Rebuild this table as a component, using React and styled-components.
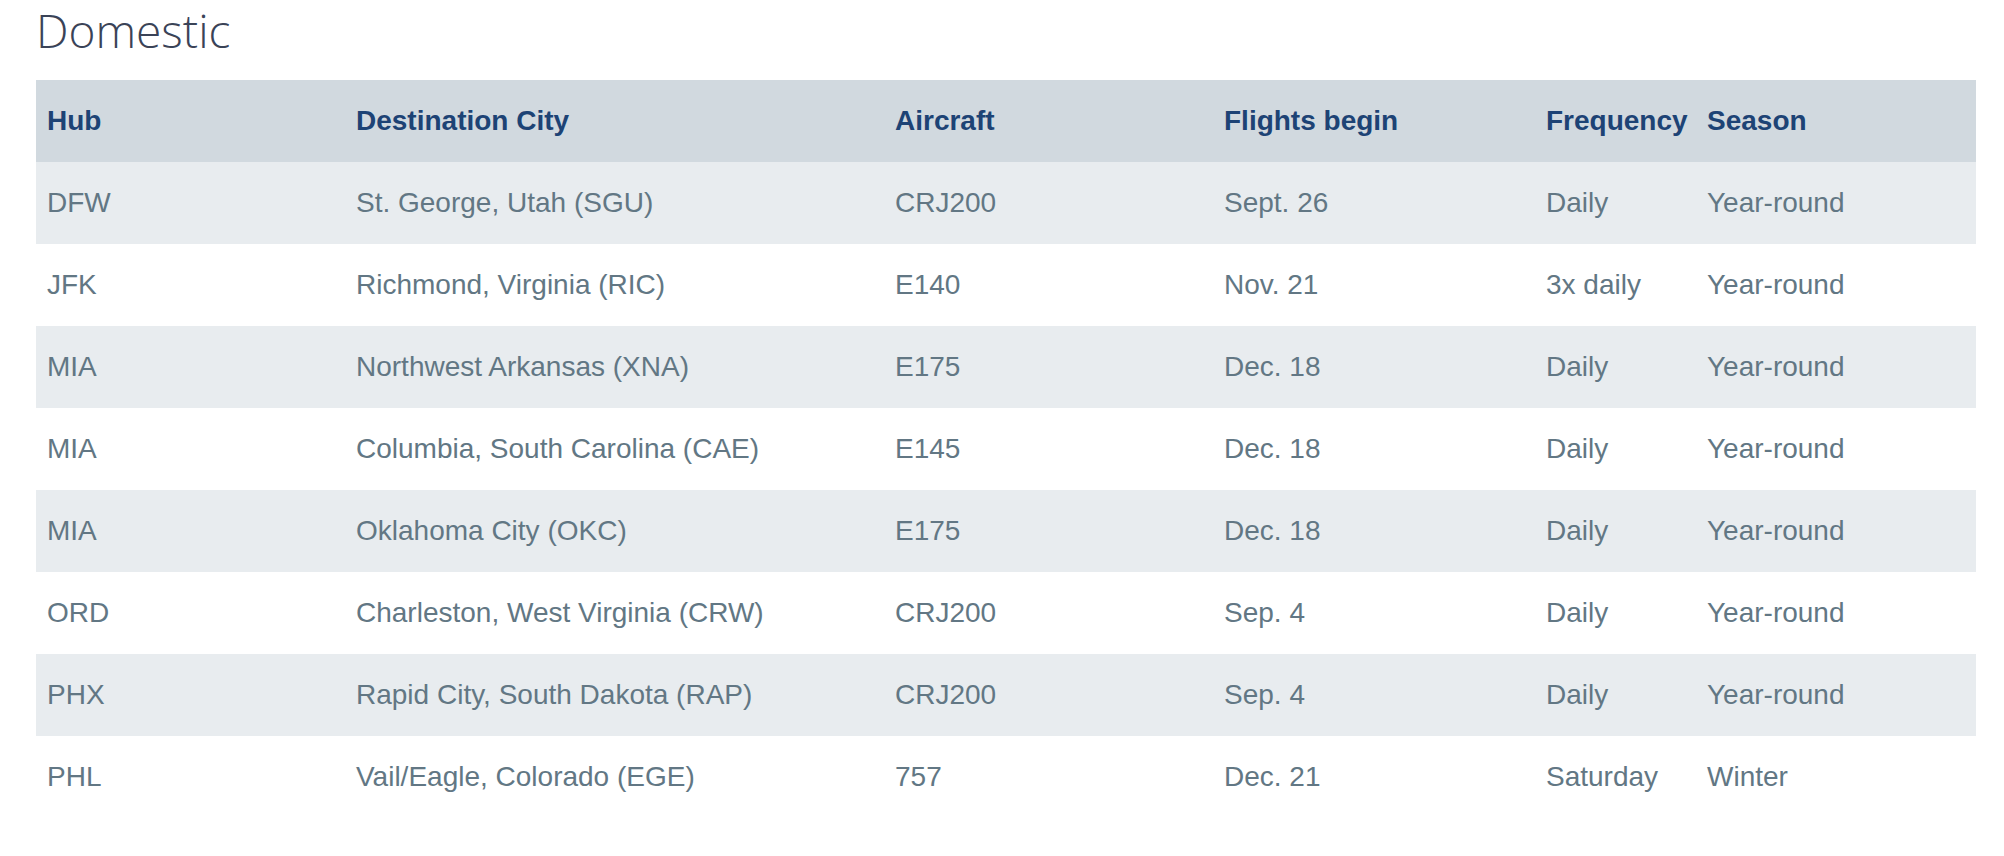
import styled, { createGlobalStyle } from 'styled-components';

const GlobalStyle = createGlobalStyle`
  html, body {
    margin: 0;
    padding: 0;
    background: #fff;
  }
`;

const Page = styled.div`
  padding: 0 28px 0 36px;
`;

const Title = styled.h2`
  margin: 0 0 20px;
  height: 60px;
  font-family: 'Open Sans', 'Liberation Sans', sans-serif;
  font-weight: 300;
  font-size: 46px;
  line-height: 60px;
  color: #3a4357;
`;

const Table = styled.table`
  width: 1940px;
  border-collapse: collapse;
  table-layout: fixed;
  font-family: 'Liberation Sans', Arial, sans-serif;
  font-size: 28px;
`;

const HeadCell = styled.th`
  height: 82px;
  padding: 0 0 0 11px;
  text-align: left;
  vertical-align: middle;
  font-weight: 700;
  color: #1d4375;
  background: #d1d9df;
  white-space: nowrap;
`;

const Row = styled.tr`
  background: ${(p) => (p.$striped ? '#e8ecef' : '#fff')};
`;

const Cell = styled.td`
  height: 82px;
  padding: 0 0 0 11px;
  vertical-align: middle;
  color: #627784;
  white-space: nowrap;
`;

const columns = [
  { label: 'Hub', width: 309 },
  { label: 'Destination City', width: 539 },
  { label: 'Aircraft', width: 329 },
  { label: 'Flights begin', width: 322 },
  { label: 'Frequency', width: 161 },
  { label: 'Season', width: 280 },
];

const flights = [
  ['DFW', 'St. George, Utah (SGU)', 'CRJ200', 'Sept. 26', 'Daily', 'Year-round'],
  ['JFK', 'Richmond, Virginia (RIC)', 'E140', 'Nov. 21', '3x daily', 'Year-round'],
  ['MIA', 'Northwest Arkansas (XNA)', 'E175', 'Dec. 18', 'Daily', 'Year-round'],
  ['MIA', 'Columbia, South Carolina (CAE)', 'E145', 'Dec. 18', 'Daily', 'Year-round'],
  ['MIA', 'Oklahoma City (OKC)', 'E175', 'Dec. 18', 'Daily', 'Year-round'],
  ['ORD', 'Charleston, West Virginia (CRW)', 'CRJ200', 'Sep. 4', 'Daily', 'Year-round'],
  ['PHX', 'Rapid City, South Dakota (RAP)', 'CRJ200', 'Sep. 4', 'Daily', 'Year-round'],
  ['PHL', 'Vail/Eagle, Colorado (EGE)', '757', 'Dec. 21', 'Saturday', 'Winter'],
];

function App() {
  return (
    <>
      <GlobalStyle />
      <Page>
        <Title>Domestic</Title>
        <Table>
          <colgroup>
            {columns.map((c) => (
              <col key={c.label} style={{ width: c.width }} />
            ))}
          </colgroup>
          <thead>
            <tr>
              {columns.map((c) => (
                <HeadCell key={c.label}>{c.label}</HeadCell>
              ))}
            </tr>
          </thead>
          <tbody>
            {flights.map((f, i) => (
              <Row key={`${f[0]}-${f[1]}`} $striped={i % 2 === 0}>
                {f.map((v, j) => (
                  <Cell key={j}>{v}</Cell>
                ))}
              </Row>
            ))}
          </tbody>
        </Table>
      </Page>
    </>
  );
}

export default App;
